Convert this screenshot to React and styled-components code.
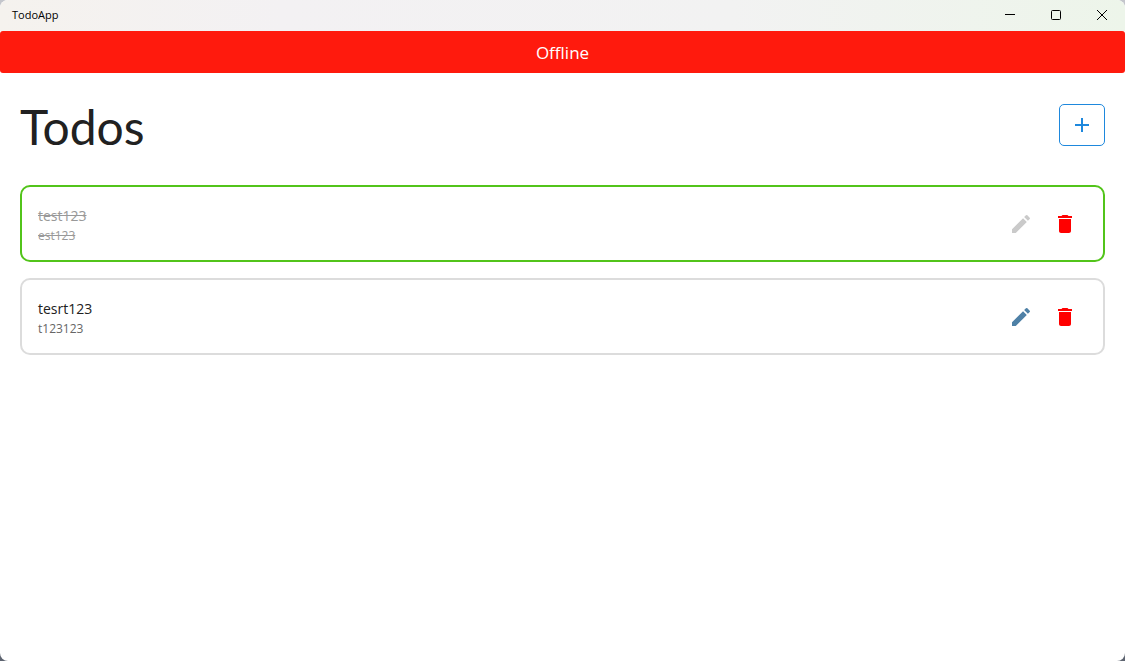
import React from "react";
import styled, { createGlobalStyle } from "styled-components";

const GlobalStyle = createGlobalStyle`
  *, *::before, *::after { box-sizing: border-box; }
  body {
    margin: 0;
    background: linear-gradient(#c4c6cc, #5d6470);
    font-family: "Segoe UI", "Open Sans", "Noto Sans", sans-serif;
    color: #212121;
  }
  button { font: inherit; cursor: pointer; }
`;

const Window = styled.div`
  min-height: 100vh;
  display: flex;
  flex-direction: column;
  overflow: hidden;
  border-radius: 8px;
  background: #fff;
`;

const TitleBar = styled.header`
  display: flex;
  align-items: flex-start;
  justify-content: space-between;
  height: 31px;
  padding-left: 12px;
  background: linear-gradient(90deg, #f5f2ee, #f3f1f3 25%, #f2f2f2 65%, #edf5ea);
`;

const AppName = styled.span`
  font-size: 11px;
  line-height: 30px;
  color: #000;
`;

const WindowControls = styled.div`
  display: flex;
`;

const WindowButton = styled.button`
  display: flex;
  align-items: center;
  justify-content: center;
  width: 46px;
  height: 30px;
  padding: 0;
  border: 0;
  background: none;
  color: #000;
`;

const Banner = styled.div`
  padding: 9px 8px 7px;
  border-radius: 3px;
  background: #ff1a0d;
  color: #fff;
  font-size: 17px;
  line-height: 26px;
  text-align: center;
`;

const Main = styled.main`
  padding: 31px 20px;
`;

const PageHeader = styled.div`
  display: flex;
  align-items: flex-start;
  justify-content: space-between;
  margin-bottom: 35px;
`;

const Heading = styled.h1`
  margin: 0;
  font-family: "Segoe UI", Lato, sans-serif;
  font-size: 48px;
  font-weight: 400;
  line-height: 46px;
`;

const AddButton = styled.button`
  display: flex;
  align-items: center;
  justify-content: center;
  width: 46px;
  height: 42px;
  padding: 0;
  border: 1px solid #1e88dd;
  border-radius: 5px;
  background: #fff;
  color: #1e88dd;
`;

const TodoList = styled.ul`
  display: flex;
  flex-direction: column;
  gap: 16px;
  margin: 0;
  padding: 0;
  list-style: none;
`;

const TodoCard = styled.li`
  display: flex;
  align-items: center;
  justify-content: space-between;
  padding: 14px 16px;
  border: 2px solid ${({ $done }) => ($done ? "#52c41a" : "#dcdcdc")};
  border-radius: 10px;
`;

const TodoText = styled.div`
  padding-top: 5px;
  text-decoration: ${({ $done }) => ($done ? "line-through" : "none")};
  color: ${({ $done }) => ($done ? "#999" : "#212121")};
`;

const TodoTitle = styled.div`
  font-size: 14px;
  line-height: 20px;
`;

const TodoDetail = styled.div`
  font-size: 12px;
  line-height: 20px;
  color: ${({ $done }) => ($done ? "#999" : "#666")};
`;

const Actions = styled.div`
  display: flex;
`;

const IconButton = styled.button`
  display: flex;
  align-items: center;
  justify-content: center;
  width: 44px;
  height: 45px;
  padding: 0;
  border: 0;
  background: none;
  color: ${({ $color }) => $color};
  &:disabled { color: #cacaca; cursor: default; }
`;

const Icon = ({ d }) => (
  <svg width="24" height="24" viewBox="0 0 24 24" fill="currentColor" aria-hidden="true">
    <path d={d} />
  </svg>
);

const ControlIcon = ({ children }) => (
  <svg width="12" height="12" viewBox="0 0 12 12" fill="none" stroke="currentColor" aria-hidden="true">
    {children}
  </svg>
);

const ADD = "M19 13h-6v6h-2v-6H5v-2h6V5h2v6h6v2z";
const EDIT =
  "M3 17.25V21h3.75L17.81 9.94l-3.75-3.75L3 17.25zM20.71 7.04c.39-.39.39-1.02 0-1.41l-2.34-2.34a.9959.9959 0 0 0-1.41 0l-1.83 1.83 3.75 3.75 1.83-1.83z";
const DELETE =
  "M6 19c0 1.1.9 2 2 2h8c1.1 0 2-.9 2-2V7H6v12zM19 4h-3.5l-1-1h-5l-1 1H5v2h14V4z";

const todos = [
  { id: 1, title: "test123", detail: "est123", done: true },
  { id: 2, title: "tesrt123", detail: "t123123", done: false },
];

export default function App() {
  return (
    <>
      <GlobalStyle />
      <Window>
        <TitleBar>
          <AppName>TodoApp</AppName>
          <WindowControls>
            <WindowButton aria-label="Minimize">
              <ControlIcon><path d="M1 5.5h10" /></ControlIcon>
            </WindowButton>
            <WindowButton aria-label="Maximize">
              <ControlIcon><rect x="1.5" y="1.5" width="9" height="9" rx="1" /></ControlIcon>
            </WindowButton>
            <WindowButton aria-label="Close">
              <ControlIcon><path d="M1 1l10 10M11 1L1 11" /></ControlIcon>
            </WindowButton>
          </WindowControls>
        </TitleBar>
        <Banner role="status">Offline</Banner>
        <Main>
          <PageHeader>
            <Heading>Todos</Heading>
            <AddButton aria-label="Add todo"><Icon d={ADD} /></AddButton>
          </PageHeader>
          <TodoList>
            {todos.map(({ id, title, detail, done }) => (
              <TodoCard key={id} $done={done}>
                <TodoText $done={done}>
                  <TodoTitle>{title}</TodoTitle>
                  <TodoDetail $done={done}>{detail}</TodoDetail>
                </TodoText>
                <Actions>
                  <IconButton aria-label="Edit" $color="#4e80a6" disabled={done}><Icon d={EDIT} /></IconButton>
                  <IconButton aria-label="Delete" $color="#ff0000"><Icon d={DELETE} /></IconButton>
                </Actions>
              </TodoCard>
            ))}
          </TodoList>
        </Main>
      </Window>
    </>
  );
}
